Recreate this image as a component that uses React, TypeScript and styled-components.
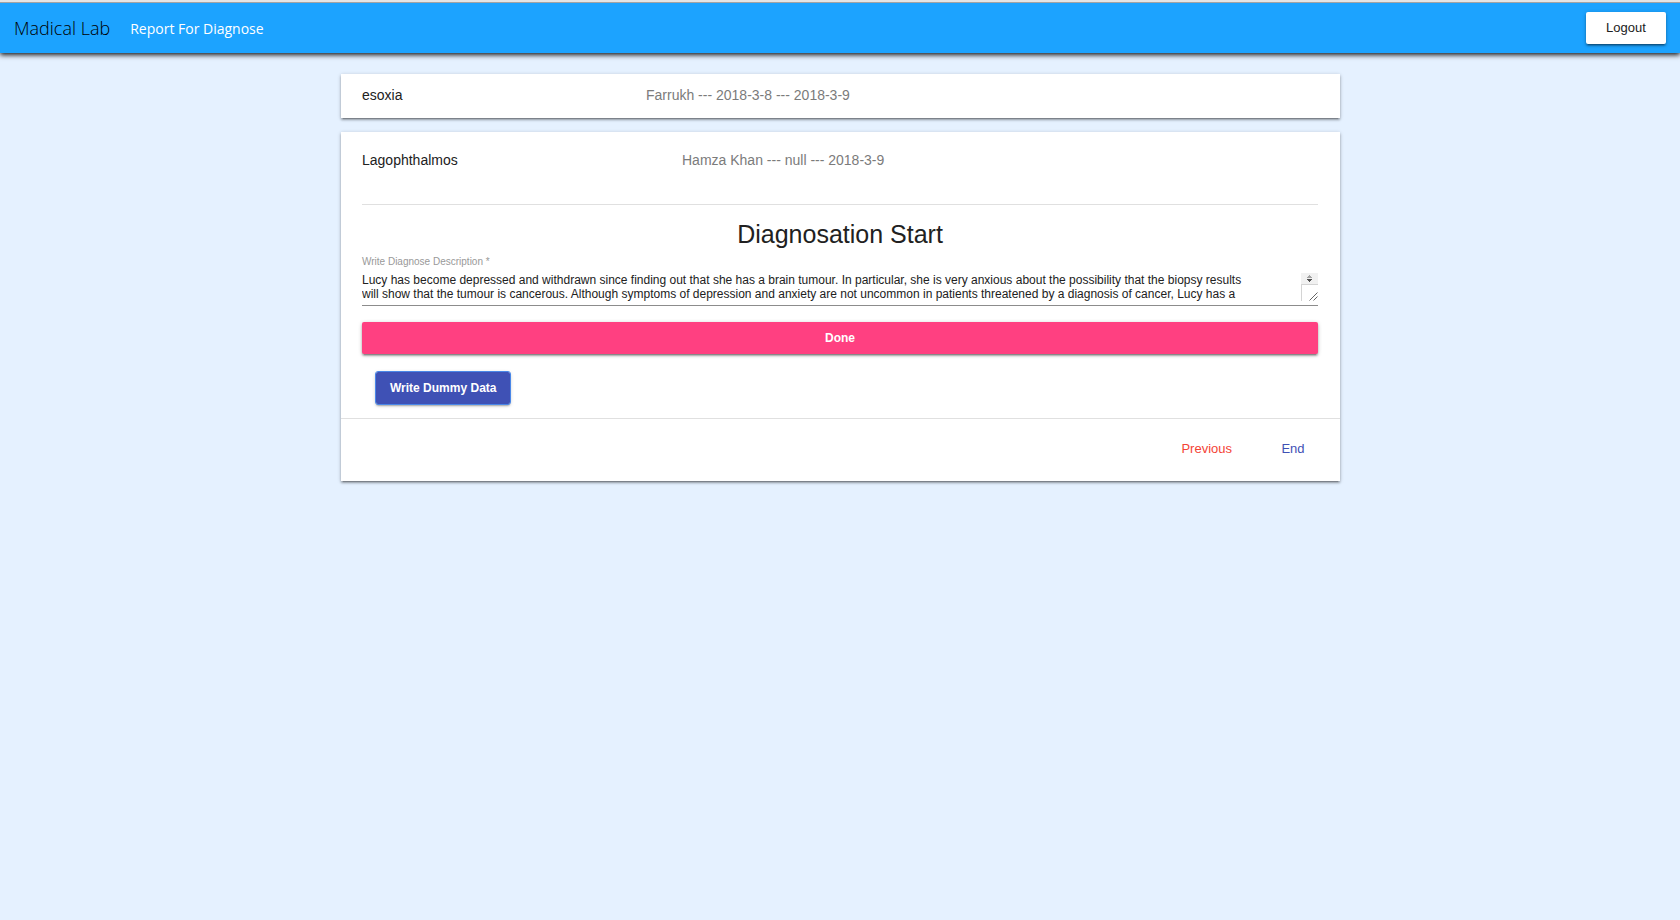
import React, { useState } from "react";
import styled, { createGlobalStyle, css } from "styled-components";

const GlobalStyle = createGlobalStyle`
  * { box-sizing: border-box; }
  body {
    margin: 0;
    min-height: 100vh;
    background: #e5f1ff;
    color: #212121;
    font-family: "Liberation Sans", Arial, sans-serif;
    font-size: 14px;
  }
`;

const Header = styled.header`
  display: flex;
  align-items: center;
  height: 53px;
  padding: 0 14px;
  border-top: 3px solid #a3a3a3;
  border-image: linear-gradient(#e4e4e4 0 2px, #a3a3a3 2px 3px) 3 0 0 0;
  background: #1ca3ff;
  box-shadow: 0 2px 5px 0 rgba(0, 0, 0, 0.9);
`;

const Brand = styled.h1`
  margin: 0 20px 0 0;
  font: 300 18px/24px "Open Sans", sans-serif;
  color: #000;
`;

const NavLink = styled.a`
  padding-top: 2px;
  font: 400 14px/20px "Open Sans", sans-serif;
  color: #fff;
  text-decoration: none;
`;

type Tone = "plain" | "accent" | "primary";

const tones = {
  plain: css`
    background: #fff;
    color: #212121;
    font-size: 13px;
  `,
  accent: css`
    background: #ff4081;
    color: #fff;
    font-weight: 700;
  `,
  primary: css`
    background: #3f51b5;
    color: #fff;
    font-weight: 700;
    outline: 1px solid #4a87e8;
  `,
};

const elevation = css`
  box-shadow:
    0 3px 1px -2px rgba(0, 0, 0, 0.2),
    0 2px 2px 0 rgba(0, 0, 0, 0.24),
    0 1px 4px 0 rgba(0, 0, 0, 0.22);
`;

const RaisedButton = styled.button<{ $tone: Tone }>`
  height: 32px;
  padding: 0 14px;
  border: 0;
  border-radius: 2px;
  font: 400 12px/32px "Liberation Sans", Arial, sans-serif;
  cursor: pointer;
  ${elevation}
  ${(p) => tones[p.$tone]}
`;

const LogoutButton = styled(RaisedButton)`
  min-width: 80px;
  margin: 0 0 0 auto;
`;

const DoneButton = styled(RaisedButton)`
  display: block;
  width: 100%;
  margin-top: 16px;
`;

const DummyButton = styled(RaisedButton)`
  margin: 18px 14px 14px;
`;

const Main = styled.main`
  display: flex;
  flex-direction: column;
  gap: 14px;
  max-width: 1000px;
  margin: 0 auto;
  padding: 21px 0 24px 1px;
`;

const Card = styled.section`
  background: #fff;
  ${elevation}
`;

const CardRow = styled.header<{ $open?: boolean }>`
  display: grid;
  grid-template-columns: ${(p) => (p.$open ? "320px" : "284px")} 1fr;
  align-items: center;
  height: ${(p) => (p.$open ? "58px" : "44px")};
  padding: 0 21px 2px;
  line-height: 20px;
`;

const Disease = styled.span`
  color: #212121;
`;

const Patient = styled.span`
  color: #7b7b7b;
`;

const Body = styled.div`
  margin: 14px 22px 0 21px;
  border-top: 1px solid #e0e0e0;
`;

const Title = styled.h2`
  margin: 14px 0 6px;
  font-size: 25px;
  font-weight: 400;
  line-height: 31px;
  text-align: center;
`;

const Label = styled.label`
  display: block;
  font-size: 10px;
  line-height: 12px;
  color: #999;
`;

const Field = styled.div`
  display: flex;
  margin-top: 5px;
  padding-bottom: 4px;
  border-bottom: 1px solid #8c8c8c;
`;

const Description = styled.textarea`
  flex: 1;
  height: 28px;
  padding: 0 44px 0 0;
  border: 0;
  outline: 0;
  resize: none;
  overflow: hidden;
  background: transparent;
  color: #212121;
  font: 400 12px/14px "Liberation Sans", Arial, sans-serif;
`;

const Actions = styled.footer`
  display: flex;
  justify-content: flex-end;
  align-items: center;
  gap: 14px;
  height: 63px;
  padding: 0 15px 2px;
  border-top: 1px solid #e0e0e0;
`;

const FlatButton = styled.button<{ $color: string }>`
  min-width: 64px;
  height: 32px;
  padding: 0 15px;
  border: 0;
  background: transparent;
  color: ${(p) => p.$color};
  font: 400 13px/32px "Liberation Sans", Arial, sans-serif;
  cursor: pointer;
`;

const ScrollGrip = () => (
  <svg width="17" height="28" viewBox="0 0 17 28" aria-hidden="true" shapeRendering="crispEdges">
    <path d="M0 0h17v11H0z" fill="#f1f1f1" />
    <path d="M0 11h17v1H1v16H0z" fill="#d4d4d4" />
    <path d="M8 2h1v1h1v1h1v1H6V4h1V3h1z" fill="#a3a3a3" />
    <path d="M6 6h5v1h-1v1H9v1H8V8H7V7H6z" fill="#505050" />
    <path d="M8.500 27.500l8-8M12.500 27.500l4-4" stroke="#666" fill="none" shapeRendering="auto" />
  </svg>
);

const SAMPLE =
  "Lucy has become depressed and withdrawn since finding out that she has a brain tumour. In particular, she is very anxious about the possibility that the biopsy results will show that the tumour is cancerous. Although symptoms of depression and anxiety are not uncommon in patients threatened by a diagnosis of cancer, Lucy has a";

export default function App() {
  const [description, setDescription] = useState(SAMPLE);

  return (
    <>
      <GlobalStyle />
      <Header>
        <Brand>Madical Lab</Brand>
        <NavLink href="#report">Report For Diagnose</NavLink>
        <LogoutButton type="button" $tone="plain">Logout</LogoutButton>
      </Header>
      <Main>
        <Card>
          <CardRow>
            <Disease>esoxia</Disease>
            <Patient>Farrukh --- 2018-3-8 --- 2018-3-9</Patient>
          </CardRow>
        </Card>
        <Card>
          <CardRow $open>
            <Disease>Lagophthalmos</Disease>
            <Patient>Hamza Khan --- null --- 2018-3-9</Patient>
          </CardRow>
          <Body>
            <Title>Diagnosation Start</Title>
            <Label htmlFor="description">Write Diagnose Description *</Label>
            <Field>
              <Description
                id="description"
                value={description}
                onChange={(e) => setDescription(e.target.value)}
              />
              <ScrollGrip />
            </Field>
            <DoneButton type="button" $tone="accent">Done</DoneButton>
            <DummyButton type="button" $tone="primary" onClick={() => setDescription(SAMPLE)}>
              Write Dummy Data
            </DummyButton>
          </Body>
          <Actions>
            <FlatButton type="button" $color="#f44336">Previous</FlatButton>
            <FlatButton type="button" $color="#3f51b5">End</FlatButton>
          </Actions>
        </Card>
      </Main>
    </>
  );
}
